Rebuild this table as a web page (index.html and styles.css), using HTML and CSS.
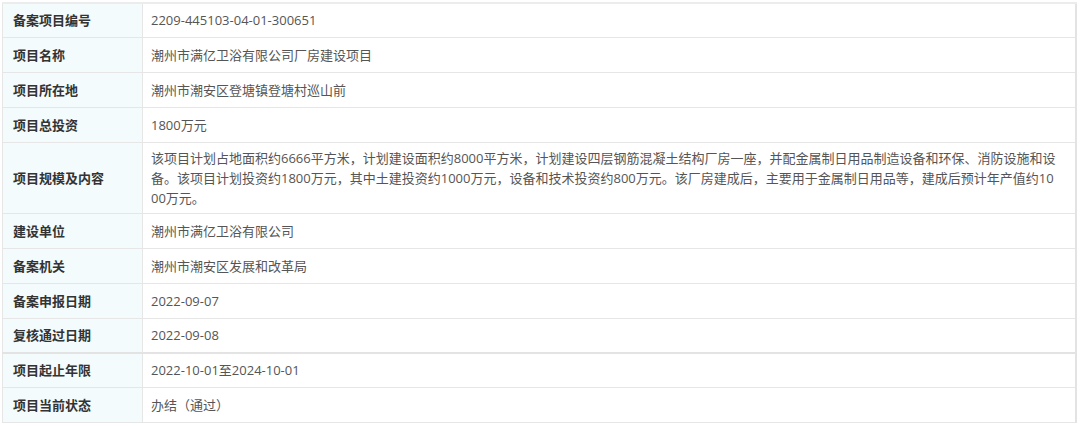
FILE: index.html
```html
<!DOCTYPE html>
<html lang="zh-CN">
<head>
<meta charset="utf-8">
<link rel="stylesheet" href="styles.css">
</head>
<body>
<table class="info">
  <tr class="first"><th>备案项目编号</th><td>2209-445103-04-01-300651</td></tr>
  <tr><th>项目名称</th><td>潮州市满亿卫浴有限公司厂房建设项目</td></tr>
  <tr><th>项目所在地</th><td>潮州市潮安区登塘镇登塘村巡山前</td></tr>
  <tr><th>项目总投资</th><td>1800万元</td></tr>
  <tr class="tall"><th>项目规模及内容</th><td>该项目计划占地面积约6666平方米，计划建设面积约8000平方米，计划建设四层钢筋混凝土结构厂房一座，并配金属制日用品制造设备和环保、消防设施和设备。该项目计划投资约1800万元，其中土建投资约1000万元，设备和技术投资约800万元。该厂房建成后，主要用于金属制日用品等，建成后预计年产值约1000万元。</td></tr>
  <tr><th>建设单位</th><td>潮州市满亿卫浴有限公司</td></tr>
  <tr><th>备案机关</th><td>潮州市潮安区发展和改革局</td></tr>
  <tr><th>备案申报日期</th><td>2022-09-07</td></tr>
  <tr><th>复核通过日期</th><td>2022-09-08</td></tr>
  <tr class="split"><th>项目起止年限</th><td>2022-10-01至2024-10-01</td></tr>
  <tr><th>项目当前状态</th><td>办结（通过）</td></tr>
</table>
</body>
</html>
```
FILE: styles.css
```css
html, body {
  margin: 0;
  padding: 0;
  background: #ffffff;
}
body {
  padding: 2px 0 0 2px;
  font-family: "Open Sans", "Noto Sans CJK SC", sans-serif;
  font-size: 13px;
}
.info {
  border-collapse: collapse;
  width: 1075px;
  border: 1px solid #e3e3e3;
  border-right: 2px solid #e3e3e3;
}
.info th, .info td {
  box-sizing: border-box;
  border: 1px solid #e6e6e6;
  height: 35px;
  padding: 0 8px;
  line-height: 20px;
  vertical-align: middle;
  text-align: left;
}
.info tr.first th, .info tr.first td {
  border-top: 2px solid #ececec;
  height: 34px;
}
.info th {
  width: 140px;
  padding-left: 10px;
  background: #f3fbfc;
  color: #333333;
  font-weight: bold;
  font-family: "Noto Sans CJK SC", sans-serif;
}
.info td {
  color: #555555;
  padding-left: 8px;
  padding-right: 15px;
  word-break: break-all;
}
.info tr.tall td {
  padding-top: 5px;
  padding-bottom: 5px;
  height: 71px;
}
.info tr.split th, .info tr.split td {
  border-top: 2px solid #e3e3e3;
  height: 34px;
}
```
